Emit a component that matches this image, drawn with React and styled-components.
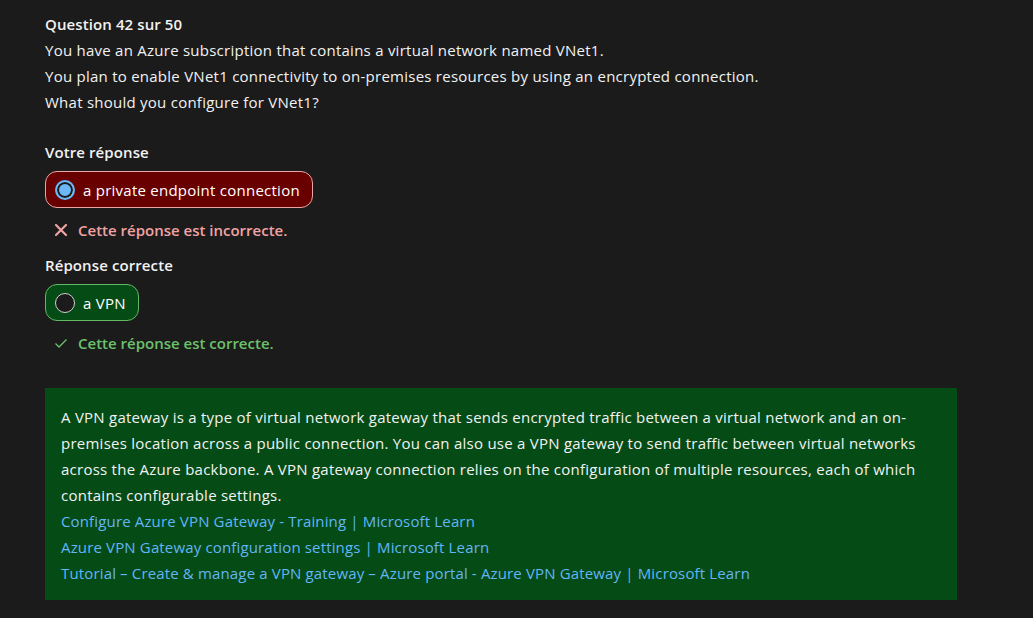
import React from 'react'
import styled, { createGlobalStyle } from 'styled-components'

const GlobalStyle = createGlobalStyle`
    html, body {
        margin: 0;
        padding: 0;
        background: #1b1b1b;
    }
    body {
        font-family: "Open Sans", "Liberation Sans", sans-serif;
        font-size: 15px;
        letter-spacing: 0.25px;
        color: #f2f2f2;
    }
`

const links = [
    'Configure Azure VPN Gateway - Training | Microsoft Learn',
    'Azure VPN Gateway configuration settings | Microsoft Learn',
    'Tutorial – Create & manage a VPN gateway – Azure portal - Azure VPN Gateway | Microsoft Learn',
]

function Radio({ checked }) {
    return <RadioCircle $checked={checked} />
}

function App() {
    return (
        <Page>
            <GlobalStyle />
            <Question>
                <Title>Question 42 sur 50</Title>
                <Line>You have an Azure subscription that contains a virtual network named VNet1.</Line>
                <Line>You plan to enable VNet1 connectivity to on-premises resources by using an encrypted connection.</Line>
                <Line>What should you configure for VNet1?</Line>
            </Question>

            <Label>Votre réponse</Label>
            <Choice $variant="wrong">
                <Radio checked />
                a private endpoint connection
            </Choice>
            <Feedback $variant="wrong">
                <svg width="14" height="14" viewBox="0 0 14 14">
                    <path d="M2 2 L12 12 M12 2 L2 12" stroke="#f1a3a3" strokeWidth="2.2" strokeLinecap="round" />
                </svg>
                Cette réponse est incorrecte.
            </Feedback>

            <Label>Réponse correcte</Label>
            <Choice $variant="right">
                <Radio />
                a VPN
            </Choice>
            <Feedback $variant="right">
                <svg width="14" height="14" viewBox="0 0 14 14">
                    <path d="M1.5 7.5 L5 11 L12.5 3.5" stroke="#6cc16c" strokeWidth="1.3" fill="none" />
                </svg>
                Cette réponse est correcte.
            </Feedback>

            <Explanation>
                <p>
                    A VPN gateway is a type of virtual network gateway that sends encrypted traffic between a virtual
                    network and an on-premises location across a public connection. You can also use a VPN gateway to
                    send traffic between virtual networks across the Azure backbone. A VPN gateway connection relies on
                    the configuration of multiple resources, each of which contains configurable settings.
                </p>
                {links.map(l => (
                    <Link key={l} href="#">{l}</Link>
                ))}
            </Explanation>
        </Page>
    )
}

const Page = styled.div`
    padding: 11px 0 0 45px;
    width: 957px;
    min-height: 618px;
    box-sizing: border-box;
    display: flex;
    flex-direction: column;
    align-items: flex-start;
`

const Question = styled.div`
    line-height: 26px;
`

const Title = styled.div`
    font-weight: 600;
    letter-spacing: 0.1px;
`

const Line = styled.div``

const Label = styled.div`
    font-weight: 600;
    line-height: 24px;
    margin-top: 25px;
    letter-spacing: 0.1px;
`

const Choice = styled.div`
    display: flex;
    align-items: center;
    gap: 8px;
    height: 37px;
    box-sizing: border-box;
    padding: 0 12px 0 9px;
    margin-top: 7px;
    border-radius: 12px;
    border: 1px solid ${p => (p.$variant === 'wrong' ? '#e9a6a6' : '#63b863')};
    background: ${p => (p.$variant === 'wrong' ? '#680000' : '#054b16')};
    color: #ffffff;
`

const RadioCircle = styled.span`
    width: 20px;
    height: 20px;
    box-sizing: border-box;
    border-radius: 50%;
    border: ${p => (p.$checked ? '2px solid #6cb8f6' : '1.5px solid #d0d0d0')};
    background: ${p => (p.$checked ? '#6cb8f6' : '#1b1b1b')};
    box-shadow: ${p => (p.$checked ? 'inset 0 0 0 2px #1b1b1b' : 'none')};
    flex-shrink: 0;
`

const Feedback = styled.div`
    display: flex;
    align-items: center;
    gap: 10px;
    padding-left: 9px;
    margin-top: 10px;
    font-weight: 600;
    letter-spacing: 0;
    line-height: 24px;
    color: ${p => (p.$variant === 'wrong' ? '#f1a3a3' : '#6cc16c')};
    & + ${Label} {
        margin-top: 11px;
    }
`

const Explanation = styled.div`
    align-self: stretch;
    margin-top: 33px;
    background: #054b16;
    padding: 16px 16px 14px 16px;
    line-height: 26px;
    color: #f2f2f2;
    p {
        margin: 0;
    }
`

const Link = styled.a`
    display: block;
    color: #62b5f6;
    letter-spacing: 0.15px;
    text-decoration: none;
`

export default App
